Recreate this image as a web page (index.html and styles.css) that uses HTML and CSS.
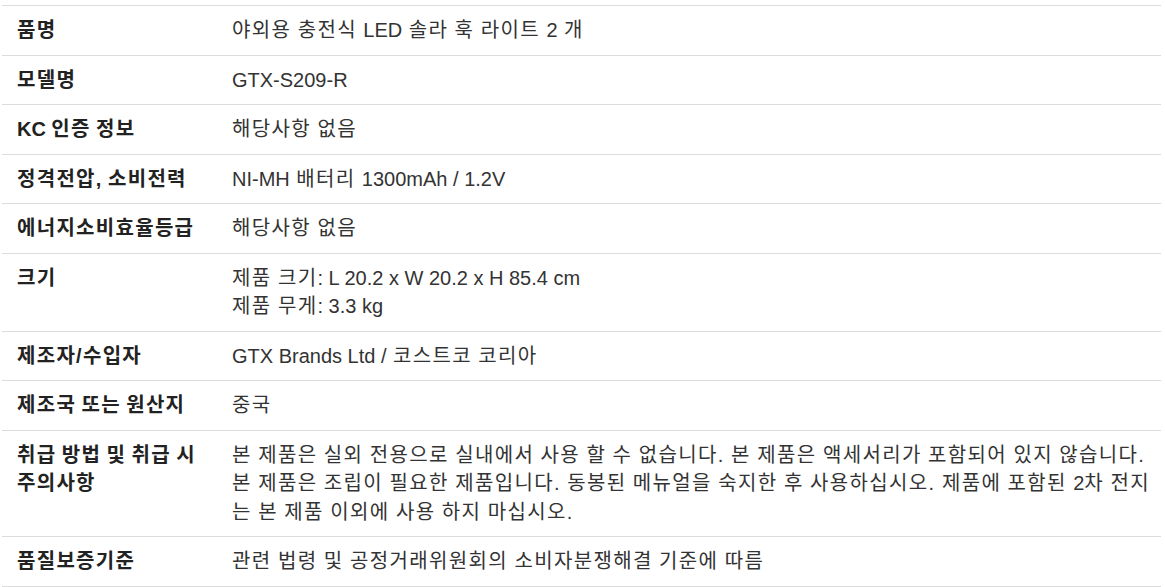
FILE: index.html
```html
<!DOCTYPE html>
<html lang="ko">
<head>
<meta charset="utf-8">
<title>상품 정보</title>
<link rel="stylesheet" href="styles.css">
</head>
<body>
<table class="spec">
  <tbody>
    <tr><th>품명</th><td>야외용 충전식 <span class="lat">LED</span> 솔라 훅 라이트 <span class="lat">2</span> 개</td></tr>
    <tr><th>모델명</th><td><span class="lat">GTX-S209-R</span></td></tr>
    <tr><th><span class="lat">KC</span> 인증 정보</th><td>해당사항 없음</td></tr>
    <tr><th>정격전압, 소비전력</th><td><span class="lat">NI-MH</span> 배터리 <span class="lat">1300mAh / 1.2V</span></td></tr>
    <tr><th>에너지소비효율등급</th><td>해당사항 없음</td></tr>
    <tr><th>크기</th><td>제품 크기<span class="lat">: L 20.2 x W 20.2 x H 85.4 cm</span><br>제품 무게<span class="lat">: 3.3 kg</span></td></tr>
    <tr><th>제조자/수입자</th><td><span class="lat">GTX Brands Ltd /</span> 코스트코 코리아</td></tr>
    <tr><th>제조국 또는 원산지</th><td>중국</td></tr>
    <tr><th>취급 방법 및 취급 시 주의사항</th><td>본 제품은 실외 전용으로 실내에서 사용 할 수 없습니다. 본 제품은 액세서리가 포함되어 있지 않습니다. 본 제품은 조립이 필요한 제품입니다. 동봉된 메뉴얼을 숙지한 후 사용하십시오. 제품에 포함된 <span class="lat">2</span>차 전지는 본 제품 이외에 사용 하지 마십시오.</td></tr>
    <tr><th>품질보증기준</th><td>관련 법령 및 공정거래위원회의 소비자분쟁해결 기준에 따름</td></tr>
  </tbody>
</table>
</body>
</html>
```
FILE: styles.css
```css
html, body {
  margin: 0;
  padding: 0;
  background: #fff;
}
body {
  font-family: "Liberation Sans", Arial, "Noto Sans CJK KR", sans-serif;
  font-size: 20px;
  line-height: 28.5px;
  color: #333;
}
.spec {
  border-collapse: collapse;
  margin: 5px 0 0 2px;
  width: 1159px;
  table-layout: fixed;
}
.spec tr {
  border-top: 1px solid #dcdcdc;
  border-bottom: 1px solid #dcdcdc;
}
.spec th {
  width: 200px;
  padding: 10px 0 10px 15px;
  text-align: left;
  vertical-align: top;
  font-weight: bold;
  color: #222;
  letter-spacing: 1.3px;
  word-spacing: -1.5px;
}
.spec td {
  padding: 10px 8px 10px 15px;
  vertical-align: top;
  color: #333;
  letter-spacing: 1.35px;
  word-spacing: -0.5px;
}
.spec .lat {
  letter-spacing: 0;
  word-spacing: 0;
}
```
